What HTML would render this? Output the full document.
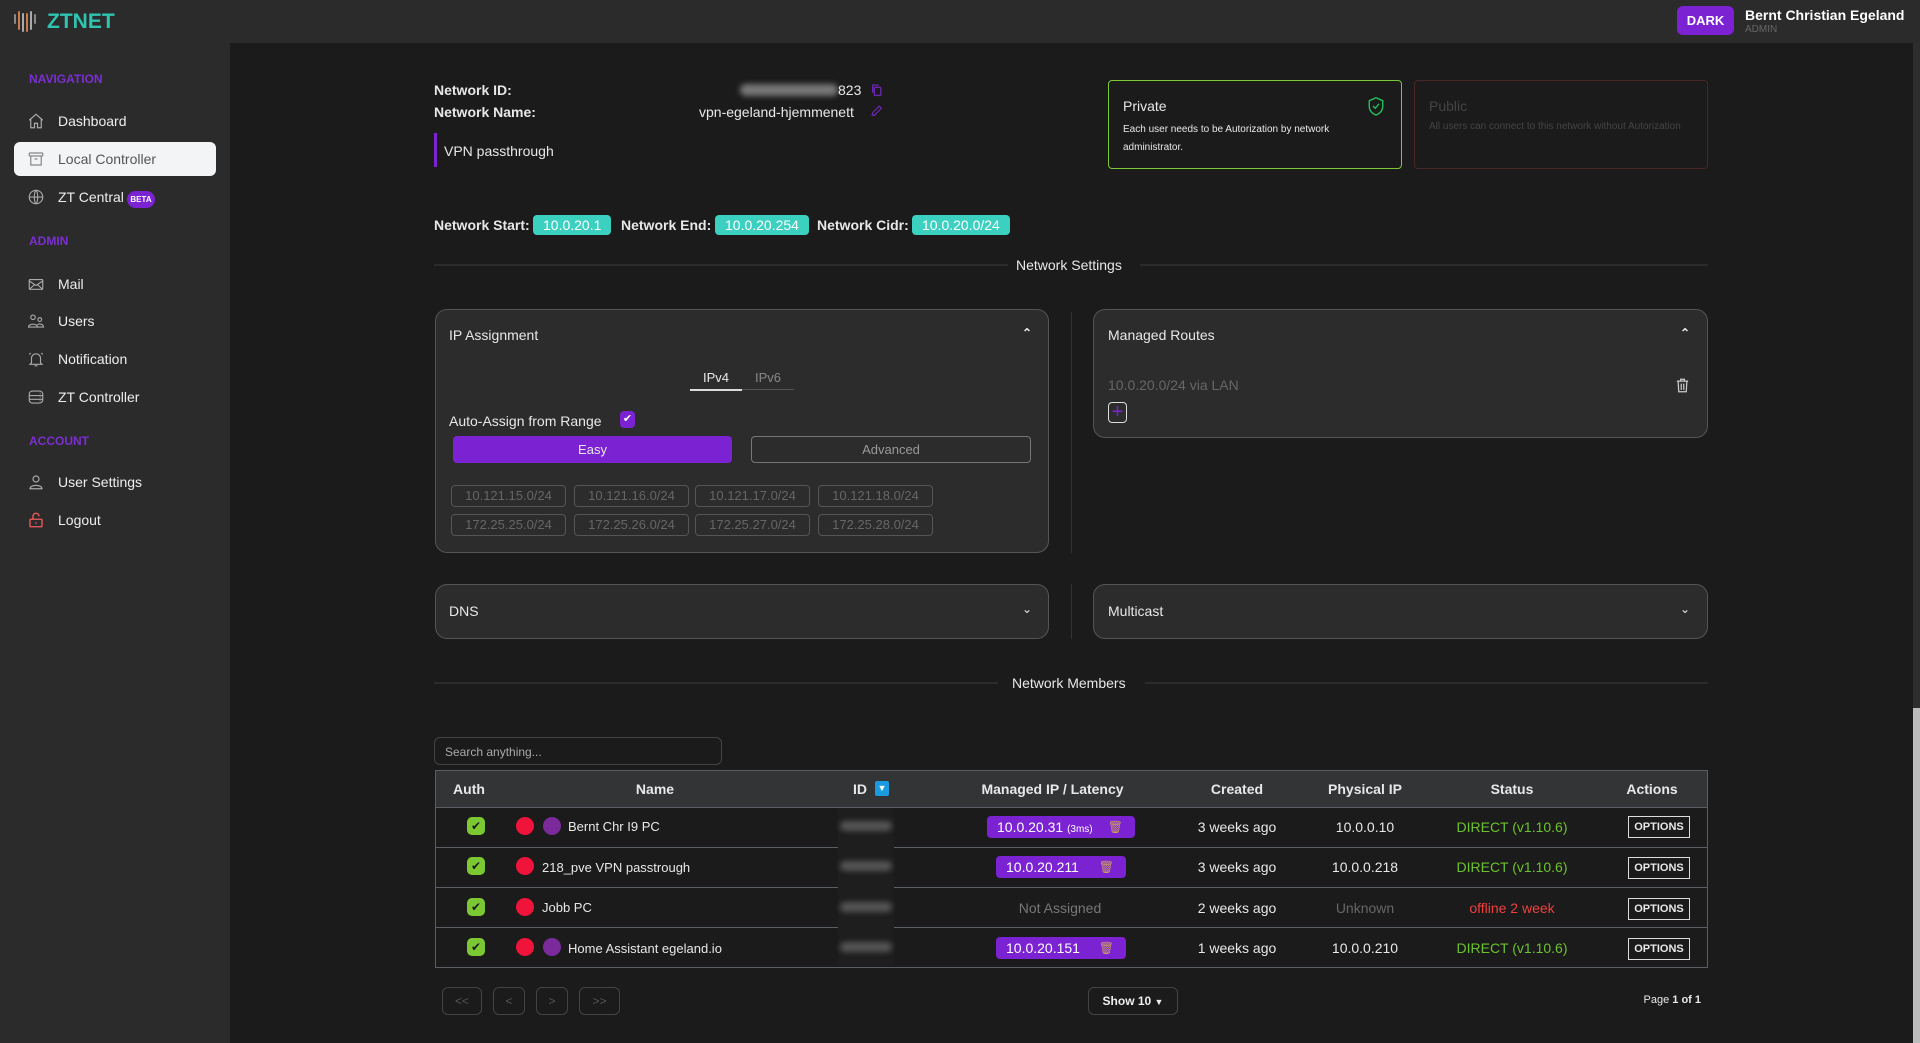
<!DOCTYPE html>
<html><head><meta charset="utf-8"><style>
*{box-sizing:border-box;margin:0;padding:0}
body{width:1920px;height:1043px;background:#1b1b1b;font-family:"Liberation Sans",sans-serif;color:#e8e8e8;position:relative;overflow:hidden;font-size:14px}
.a{position:absolute}
.hdr{left:0;top:0;width:1920px;height:43px;background:#2b2b2b}
.side{left:0;top:43px;width:230px;height:1000px;background:#2b2b2b}
.sec{left:29px;font-size:12px;color:#7b2fd0;font-weight:bold}
.nav{left:58px;font-size:14px;color:#eee}
.ico{left:27px;width:18px;height:18px}
.lbl{font-weight:bold;font-size:14px}
.badge{background:#3cd0c0;color:#fff;border-radius:4px;height:20px;line-height:20px;padding:0 10px;font-size:14px}
.card{background:#2c2c2c;border:1px solid #555;border-radius:12px}
.rng{border:1px solid #555;border-radius:4px;color:#666;font-size:13px;height:22px;line-height:20px;text-align:center;width:115px}
.row{left:435px;width:1273px;height:40px;border-top:1px solid #5a5f66}
.c{position:absolute;text-align:center;font-size:14px}
.chk{width:18px;height:18px;border-radius:5px;background:#7cc832}
.dot{width:18px;height:18px;border-radius:50%}
.ipb{background:#7b22d3;color:#fff;border-radius:4px;height:22px;line-height:22px;font-size:14px}
.opt{border:1px solid #ddd;font-size:11px;font-weight:bold;width:62px;height:22px;line-height:20px;text-align:center}
.pg{border:1px solid #444;border-radius:6px;height:28px;top:987px;color:#555;font-size:12px;text-align:center;line-height:26px}
</style></head><body>
<div class="a hdr"></div>
<div class="a side"></div>
<svg class="a" style="left:13px;top:9px" width="24" height="24" viewBox="0 0 24 24"><g stroke-width="2" stroke-linecap="round"><line x1="2" y1="6" x2="2" y2="14" stroke="#888"/><line x1="6" y1="3" x2="6" y2="20" stroke="#c87a50"/><line x1="10" y1="5" x2="10" y2="22" stroke="#aaa"/><line x1="14" y1="5" x2="14" y2="22" stroke="#c87a50"/><line x1="18" y1="3" x2="18" y2="20" stroke="#aaa"/><line x1="22" y1="6" x2="22" y2="14" stroke="#888"/></g></svg>
<div class="a" style="left:47px;top:10px;font-size:21px;font-weight:bold;color:#2ec4b0">ZTNET</div>
<div class="a" style="left:1677px;top:6px;width:57px;height:29px;border-radius:6px;background:#7b22d3;color:#fff;font-weight:bold;font-size:13px;text-align:center;line-height:29px">DARK</div>
<div class="a" style="left:1745px;top:7px;font-weight:bold;font-size:14px;color:#fff">Bernt Christian Egeland</div>
<div class="a" style="left:1745px;top:24px;font-size:10px;color:#666">ADMIN</div>
<div class="a sec" style="top:72px">NAVIGATION</div>
<div class="a sec" style="top:234px">ADMIN</div>
<div class="a sec" style="top:434px">ACCOUNT</div>
<div class="a" style="left:14px;top:142px;width:202px;height:34px;background:#f3f4f6;border-radius:6px"></div>
<svg class="a ico" style="top:112px" viewBox="0 0 24 24" fill="none" stroke="#aaa" stroke-width="1.6"><path d="M3 11l9-8 9 8M5 9v12h5v-6h4v6h5V9"/></svg>
<div class="a nav" style="top:113px">Dashboard</div>
<svg class="a ico" style="top:150px" viewBox="0 0 24 24" fill="none" stroke="#888" stroke-width="1.6"><rect x="3" y="4" width="18" height="4" rx="1"/><path d="M5 8v12h14V8M10 12h4"/></svg>
<div class="a nav" style="top:151px;color:#555">Local Controller</div>
<svg class="a ico" style="top:188px" viewBox="0 0 24 24" fill="none" stroke="#aaa" stroke-width="1.5"><circle cx="12" cy="12" r="9"/><path d="M3 12h18M12 3c3 3 3 15 0 18M12 3c-3 3-3 15 0 18"/></svg>
<div class="a nav" style="top:189px">ZT Central</div>
<div class="a" style="left:127px;top:191px;width:28px;height:17px;border-radius:9px;background:#7b22d3;color:#fff;font-size:8px;font-weight:bold;text-align:center;line-height:17px">BETA</div>
<svg class="a ico" style="top:275px" viewBox="0 0 24 24" fill="none" stroke="#aaa" stroke-width="1.5"><rect x="3" y="6" width="18" height="13" rx="1"/><path d="M3 8l9 6 9-6M3 19l7-6M21 19l-7-6"/></svg>
<div class="a nav" style="top:276px">Mail</div>
<svg class="a ico" style="top:312px" viewBox="0 0 24 24" fill="none" stroke="#aaa" stroke-width="1.5"><circle cx="8" cy="7" r="3"/><circle cx="17" cy="10" r="2.5"/><path d="M2 20c0-5 12-5 12 0zM14 20h8c0-4-6-5-8-3"/></svg>
<div class="a nav" style="top:313px">Users</div>
<svg class="a ico" style="top:350px" viewBox="0 0 24 24" fill="none" stroke="#aaa" stroke-width="1.5"><path d="M6 17V11a6 6 0 0112 0v6l2 2H4zM10 21h4M3 6l2-2M21 6l-2-2"/></svg>
<div class="a nav" style="top:351px">Notification</div>
<svg class="a ico" style="top:388px" viewBox="0 0 24 24" fill="none" stroke="#aaa" stroke-width="1.5"><rect x="3" y="4" width="18" height="16" rx="4"/><path d="M3 10h18M3 15h18M17 7h1M17 12h1M17 17h1"/></svg>
<div class="a nav" style="top:389px">ZT Controller</div>
<svg class="a ico" style="top:473px" viewBox="0 0 24 24" fill="none" stroke="#aaa" stroke-width="1.6"><circle cx="12" cy="8" r="4"/><path d="M4 21c0-6 16-6 16 0z"/></svg>
<div class="a nav" style="top:474px">User Settings</div>
<svg class="a ico" style="top:511px" viewBox="0 0 24 24" fill="none" stroke="#f05a5a" stroke-width="1.8"><rect x="4" y="11" width="16" height="10" rx="1"/><path d="M8 11V7a4 4 0 018 0M12 15v2"/></svg>
<div class="a nav" style="top:512px">Logout</div>
<div class="a" style="left:1913px;top:43px;width:7px;height:665px;background:#2d2d2d"></div>
<div class="a" style="left:1913px;top:708px;width:7px;height:335px;background:#bbb"></div>
<div class="a lbl" style="left:434px;top:82px">Network ID:</div>
<div class="a lbl" style="left:434px;top:104px">Network Name:</div>
<div class="a" style="left:740px;top:84px;width:98px;height:12px;background:#777;border-radius:6px;filter:blur(3px)"></div>
<div class="a" style="left:838px;top:82px">823</div>
<svg class="a" style="left:870px;top:83px" width="13" height="14" viewBox="0 0 24 24" fill="none" stroke="#6a28b0" stroke-width="2.5"><rect x="8" y="7" width="12" height="15" rx="2"/><path d="M5 17V3h11"/></svg>
<div class="a" style="left:699px;top:104px">vpn-egeland-hjemmenett</div>
<svg class="a" style="left:870px;top:104px" width="13" height="14" viewBox="0 0 24 24" fill="none" stroke="#6a28b0" stroke-width="2.2"><path d="M4 20l1-5L17 3l4 4L9 19zM4 20h6"/></svg>
<div class="a" style="left:434px;top:133px;width:3px;height:34px;background:#7b22d3"></div>
<div class="a" style="left:444px;top:143px">VPN passthrough</div>
<div class="a" style="left:1108px;top:80px;width:294px;height:89px;border:1px solid #7cc832;border-radius:4px"></div>
<div class="a" style="left:1123px;top:98px;font-size:14px">Private</div>
<div class="a" style="left:1123px;top:121px;font-size:10px;line-height:18px;width:230px">Each user needs to be Autorization by network administrator.</div>
<svg class="a" style="left:1367px;top:96px" width="18" height="20" viewBox="0 0 24 26" fill="none" stroke="#22c55e" stroke-width="1.8"><path d="M12 2l9 4v7c0 6-4 10-9 12-5-2-9-6-9-12V6zM8 13l3 3 5-6"/></svg>
<div class="a" style="left:1414px;top:80px;width:294px;height:89px;border:1px solid #4a2626;border-radius:4px"></div>
<div class="a" style="left:1429px;top:98px;font-size:14px;color:#444">Public</div>
<div class="a" style="left:1429px;top:121px;font-size:10px;color:#444">All users can connect to this network without Autorization</div>
<div class="a lbl" style="left:434px;top:217px">Network Start:</div>
<div class="a badge" style="left:533px;top:215px">10.0.20.1</div>
<div class="a lbl" style="left:621px;top:217px">Network End:</div>
<div class="a badge" style="left:715px;top:215px">10.0.20.254</div>
<div class="a lbl" style="left:817px;top:217px">Network Cidr:</div>
<div class="a badge" style="left:912px;top:215px">10.0.20.0/24</div>
<div class="a" style="left:434px;top:264px;width:574px;height:2px;background:#2b2b2b"></div>
<div class="a" style="left:1140px;top:264px;width:568px;height:2px;background:#2b2b2b"></div>
<div class="a" style="left:1016px;top:257px">Network Settings</div>
<div class="a card" style="left:435px;top:309px;width:614px;height:244px"></div>
<div class="a" style="left:449px;top:327px">IP Assignment</div>
<div class="a" style="left:1022px;top:326px;font-size:12px;font-weight:bold">&#8963;</div>
<div class="a" style="left:690px;top:370px;width:52px;text-align:center;font-size:13px">IPv4</div>
<div class="a" style="left:742px;top:370px;width:52px;text-align:center;font-size:13px;color:#888">IPv6</div>
<div class="a" style="left:690px;top:389px;width:104px;height:1px;background:#555"></div>
<div class="a" style="left:690px;top:389px;width:52px;height:2px;background:#ddd"></div>
<div class="a" style="left:449px;top:413px">Auto-Assign from Range</div>
<div class="a" style="left:620px;top:411px;width:15px;height:17px;border-radius:4px;background:#7b22d3;color:#fff;font-size:11px;text-align:center;line-height:17px">&#10004;</div>
<div class="a" style="left:453px;top:436px;width:279px;height:27px;background:#7b22d3;border-radius:4px;text-align:center;line-height:27px;font-size:13px">Easy</div>
<div class="a" style="left:751px;top:436px;width:280px;height:27px;border:1px solid #777;border-radius:4px;text-align:center;line-height:25px;font-size:13px;color:#999">Advanced</div>
<div class="a rng" style="left:451px;top:485px">10.121.15.0/24</div>
<div class="a rng" style="left:574px;top:485px">10.121.16.0/24</div>
<div class="a rng" style="left:695px;top:485px">10.121.17.0/24</div>
<div class="a rng" style="left:818px;top:485px">10.121.18.0/24</div>
<div class="a rng" style="left:451px;top:514px">172.25.25.0/24</div>
<div class="a rng" style="left:574px;top:514px">172.25.26.0/24</div>
<div class="a rng" style="left:695px;top:514px">172.25.27.0/24</div>
<div class="a rng" style="left:818px;top:514px">172.25.28.0/24</div>
<div class="a" style="left:1071px;top:312px;width:1px;height:241px;background:#333"></div>
<div class="a card" style="left:1093px;top:309px;width:615px;height:129px"></div>
<div class="a" style="left:1108px;top:327px">Managed Routes</div>
<div class="a" style="left:1680px;top:326px;font-size:12px;font-weight:bold">&#8963;</div>
<div class="a" style="left:1108px;top:377px;color:#666">10.0.20.0/24 via LAN</div>
<svg class="a" style="left:1675px;top:377px" width="15" height="17" viewBox="0 0 24 26" fill="none" stroke="#ccc" stroke-width="2"><path d="M3 6h18M9 6V3h6v3M5 6l1 17h12l1-17M10 10v10M14 10v10"/></svg>
<div class="a" style="left:1108px;top:402px;width:19px;height:21px;border:1px solid #ddd;border-radius:4px;color:#7b22d3;font-size:20px;text-align:center;line-height:18px">+</div>
<div class="a card" style="left:435px;top:584px;width:614px;height:55px"></div>
<div class="a" style="left:449px;top:603px">DNS</div>
<div class="a" style="left:1022px;top:602px;font-size:12px">&#8964;</div>
<div class="a" style="left:1071px;top:584px;width:1px;height:55px;background:#333"></div>
<div class="a card" style="left:1093px;top:584px;width:615px;height:55px"></div>
<div class="a" style="left:1108px;top:603px">Multicast</div>
<div class="a" style="left:1680px;top:602px;font-size:12px">&#8964;</div>
<div class="a" style="left:434px;top:682px;width:564px;height:2px;background:#2b2b2b"></div>
<div class="a" style="left:1145px;top:682px;width:563px;height:2px;background:#2b2b2b"></div>
<div class="a" style="left:1012px;top:675px">Network Members</div>
<div class="a" style="left:434px;top:737px;width:288px;height:28px;border:1px solid #444;border-radius:6px;color:#aaa;font-size:12px;padding:7px 10px">Search anything...</div>
<div class="a" style="left:435px;top:770px;width:1273px;height:198px;border:1px solid #5a5f66"></div>
<div class="a" style="left:436px;top:771px;width:1271px;height:36px;background:#333436"></div>
<div class="a row" style="top:807px"></div>
<div class="a row" style="top:847px"></div>
<div class="a row" style="top:887px"></div>
<div class="a row" style="top:927px"></div>
<div class="c lbl" style="left:439px;top:781px;width:60px">Auth</div>
<div class="c lbl" style="left:600px;top:781px;width:110px">Name</div>
<div class="c lbl" style="left:850px;top:781px;width:20px">ID</div>
<div class="a" style="left:875px;top:781px;width:14px;height:15px;background:#1a9be0;border-radius:2px;color:#fff;font-size:9px;text-align:center;line-height:15px">&#9660;</div>
<div class="c lbl" style="left:950px;top:781px;width:205px">Managed IP / Latency</div>
<div class="c lbl" style="left:1187px;top:781px;width:100px">Created</div>
<div class="c lbl" style="left:1315px;top:781px;width:100px">Physical IP</div>
<div class="c lbl" style="left:1462px;top:781px;width:100px">Status</div>
<div class="c lbl" style="left:1602px;top:781px;width:100px">Actions</div>
<div class="a" style="left:838px;top:808px;width:56px;height:158px;background:#1e1e1e"></div>
<div class="a chk" style="left:467px;top:817px"></div><div class="a" style="left:467px;top:817px;width:18px;text-align:center;color:#1b1b1b;font-size:12px;line-height:18px">&#10004;</div>
<div class="a chk" style="left:467px;top:857px"></div><div class="a" style="left:467px;top:857px;width:18px;text-align:center;color:#1b1b1b;font-size:12px;line-height:18px">&#10004;</div>
<div class="a chk" style="left:467px;top:898px"></div><div class="a" style="left:467px;top:898px;width:18px;text-align:center;color:#1b1b1b;font-size:12px;line-height:18px">&#10004;</div>
<div class="a chk" style="left:467px;top:938px"></div><div class="a" style="left:467px;top:938px;width:18px;text-align:center;color:#1b1b1b;font-size:12px;line-height:18px">&#10004;</div>
<div class="a dot" style="left:516px;top:817px;background:#f0133a"></div><div class="a dot" style="left:543px;top:817px;background:#7a2a9a"></div>
<div class="a" style="left:568px;top:819px;font-size:13px">Bernt Chr I9 PC</div>
<div class="a dot" style="left:516px;top:857px;background:#f0133a"></div>
<div class="a" style="left:542px;top:860px;font-size:13px">218_pve VPN passtrough</div>
<div class="a dot" style="left:516px;top:898px;background:#f0133a"></div>
<div class="a" style="left:542px;top:900px;font-size:13px">Jobb PC</div>
<div class="a dot" style="left:516px;top:938px;background:#f0133a"></div><div class="a dot" style="left:543px;top:938px;background:#7a2a9a"></div>
<div class="a" style="left:568px;top:941px;font-size:13px">Home Assistant egeland.io</div>
<div class="a" style="left:840px;top:821px;width:52px;height:10px;background:#555;border-radius:5px;filter:blur(3px)"></div>
<div class="a" style="left:840px;top:861px;width:52px;height:10px;background:#555;border-radius:5px;filter:blur(3px)"></div>
<div class="a" style="left:840px;top:902px;width:52px;height:10px;background:#555;border-radius:5px;filter:blur(3px)"></div>
<div class="a" style="left:840px;top:942px;width:52px;height:10px;background:#555;border-radius:5px;filter:blur(3px)"></div>
<div class="a ipb" style="left:987px;top:816px;width:148px;padding-left:10px">10.0.20.31 <span style="font-size:10px">(3ms)</span><span style="position:absolute;right:12px;color:#c9a060;font-size:12px">&#128465;</span></div>
<div class="a ipb" style="left:996px;top:856px;width:130px;padding-left:10px">10.0.20.211<span style="position:absolute;right:12px;color:#c9a060;font-size:12px">&#128465;</span></div>
<div class="c" style="left:985px;top:900px;width:150px;color:#777">Not Assigned</div>
<div class="a ipb" style="left:996px;top:937px;width:130px;padding-left:10px">10.0.20.151<span style="position:absolute;right:12px;color:#c9a060;font-size:12px">&#128465;</span></div>
<div class="c" style="left:1187px;top:819px;width:100px">3 weeks ago</div>
<div class="c" style="left:1187px;top:859px;width:100px">3 weeks ago</div>
<div class="c" style="left:1187px;top:900px;width:100px">2 weeks ago</div>
<div class="c" style="left:1187px;top:940px;width:100px">1 weeks ago</div>
<div class="c" style="left:1315px;top:819px;width:100px">10.0.0.10</div>
<div class="c" style="left:1315px;top:859px;width:100px">10.0.0.218</div>
<div class="c" style="left:1315px;top:900px;width:100px;color:#666">Unknown</div>
<div class="c" style="left:1315px;top:940px;width:100px">10.0.0.210</div>
<div class="c" style="left:1447px;top:819px;width:130px;color:#6cc22e">DIRECT (v1.10.6)</div>
<div class="c" style="left:1447px;top:859px;width:130px;color:#6cc22e">DIRECT (v1.10.6)</div>
<div class="c" style="left:1447px;top:900px;width:130px;color:#f04040">offline 2 week</div>
<div class="c" style="left:1447px;top:940px;width:130px;color:#6cc22e">DIRECT (v1.10.6)</div>
<div class="a opt" style="left:1628px;top:816px">OPTIONS</div>
<div class="a opt" style="left:1628px;top:857px">OPTIONS</div>
<div class="a opt" style="left:1628px;top:898px">OPTIONS</div>
<div class="a opt" style="left:1628px;top:938px">OPTIONS</div>
<div class="a pg" style="left:442px;width:40px">&lt;&lt;</div>
<div class="a pg" style="left:493px;width:32px">&lt;</div>
<div class="a pg" style="left:536px;width:32px">&gt;</div>
<div class="a pg" style="left:579px;width:41px">&gt;&gt;</div>
<div class="a pg" style="left:1088px;width:90px;color:#eee;font-weight:bold">Show 10 <span style="font-size:9px">&#9660;</span></div>
<div class="a" style="left:1640px;top:994px;width:61px;text-align:right;font-size:11px">Page <b>1 of 1</b></div>
</body></html>
